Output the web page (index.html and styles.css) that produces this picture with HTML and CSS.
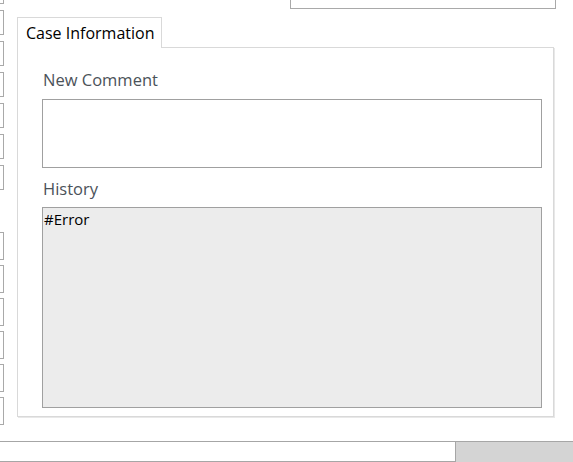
FILE: index.html
```html
<!DOCTYPE html>
<html lang="en">
<head>
    <meta charset="UTF-8">
    <meta name="viewport" content="width=device-width, initial-scale=1.0">
    <title>Case Information</title>
    <link rel="stylesheet" href="styles.css">
</head>
<body>
    <div class="page">
        <div class="layout">
            <div class="left-rail">
                <div class="rail-group">
                    <div class="rail-box"></div>
                    <div class="rail-box"></div>
                    <div class="rail-box"></div>
                    <div class="rail-box"></div>
                    <div class="rail-box"></div>
                    <div class="rail-box"></div>
                    <div class="rail-box"></div>
                </div>
                <div class="rail-group lower">
                    <div class="rail-box"></div>
                    <div class="rail-box"></div>
                    <div class="rail-box"></div>
                    <div class="rail-box"></div>
                    <div class="rail-box"></div>
                    <div class="rail-box"></div>
                </div>
            </div>
            <div class="main">
                <div class="top-field"></div>
                <div class="tabs">
                    <div class="tab active">Case Information</div>
                </div>
                <div class="panel">
                    <label class="field-label">New Comment</label>
                    <textarea class="comment-box"></textarea>
                    <label class="field-label history-label">History</label>
                    <div class="history-box">#Error</div>
                </div>
            </div>
        </div>
        <div class="status-strip">
            <div class="status-input"></div>
            <div class="status-fill"></div>
        </div>
    </div>
</body>
</html>
```

FILE: styles.css
```css
body {
    margin: 0;
    font-family: "Open Sans", "Noto Sans", sans-serif;
    background: #fff;
    color: #000;
}

.page {
    width: 573px;
    height: 462px;
    overflow: hidden;
    display: flex;
    flex-direction: column;
}

.layout {
    display: flex;
    height: 441px;
    flex-shrink: 0;
}

.left-rail {
    width: 5px;
    overflow: hidden;
    display: flex;
    flex-direction: column;
    margin-top: -21px;
}

.rail-group {
    display: flex;
    flex-direction: column;
    gap: 6px;
}

.rail-group.lower {
    margin-top: 42px;
    gap: 5px;
}

.rail-box {
    width: 24px;
    height: 25px;
    margin-left: -20px;
    border: 1px solid #a9a9a9;
    box-sizing: border-box;
    flex-shrink: 0;
}

.lower .rail-box {
    height: 28px;
}

.main {
    margin-left: 12px;
    width: 540px;
    display: flex;
    flex-direction: column;
}

.top-field {
    width: 266px;
    height: 20px;
    margin-top: -11px;
    margin-left: 273px;
    border: 1px solid #a9a9a9;
    box-sizing: border-box;
}

.tabs {
    display: flex;
    margin-top: 8px;
}

.tab {
    font-size: 16px;
    padding: 4px 7px 4px 8px;
    border: 1px solid #d9d9d9;
    border-bottom: none;
    background: #fff;
    margin-bottom: -1px;
    position: relative;
    height: 22px;
}

.panel {
    border: 1px solid #d9d9d9;
    box-shadow: 1px 1px 0 #e8e8e8;
    width: 537px;
    height: 370px;
    box-sizing: border-box;
    padding: 22px 11px 0 24px;
    display: flex;
    flex-direction: column;
}

.field-label {
    font-size: 16.5px;
    color: #4b5259;
    margin-left: 1px;
    line-height: 20px;
}

.comment-box {
    margin: 9px 0 0 0;
    width: 500px;
    height: 69px;
    border: 1px solid #a0a0a0;
    box-sizing: border-box;
    resize: none;
    padding: 0;
}

.history-label {
    margin-top: 11px;
}

.history-box {
    margin-top: 8px;
    width: 500px;
    height: 201px;
    box-sizing: border-box;
    border: 1px solid #a0a0a0;
    background: #ececec;
    font-size: 15px;
    padding: 2px 1px;
    line-height: 18px;
}

.status-strip {
    display: flex;
    height: 20px;
    flex-shrink: 0;
    border-top: 1px solid #a6a6a6;
}

.status-input {
    width: 455px;
    border-bottom: 1px solid #a6a6a6;
    border-right: 1px solid #a6a6a6;
    background: #fff;
}

.status-fill {
    flex: 1;
    background: #d4d4d4;
}
```
